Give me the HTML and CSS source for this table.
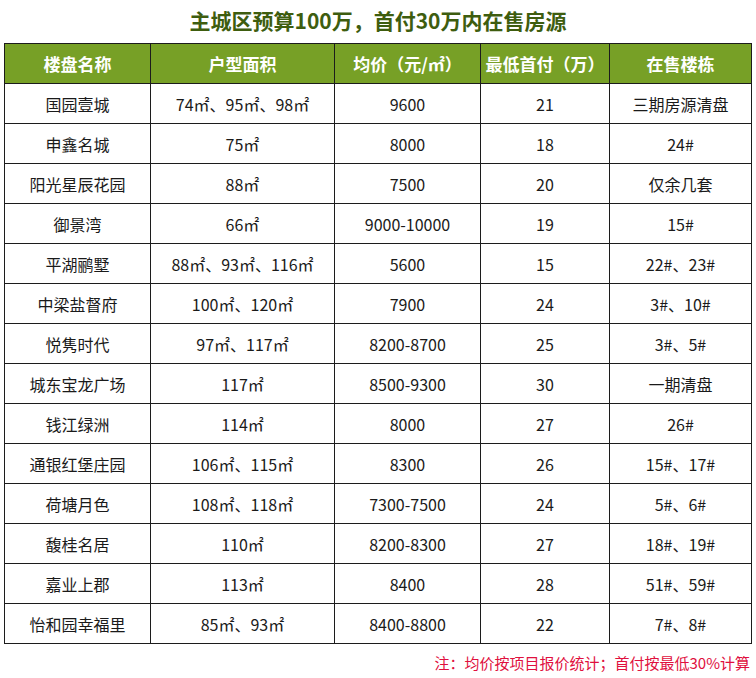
FILE: index.html
```html
<!DOCTYPE html>
<html lang="zh-CN">
<head>
<meta charset="utf-8">
<link rel="stylesheet" href="styles.css">
</head>
<body>
<div class="page">
  <h1 class="title">主城区预算100万，首付30万内在售房源</h1>
  <table class="grid">
    <colgroup>
      <col class="c1"><col class="c2"><col class="c3"><col class="c4"><col class="c5">
    </colgroup>
    <thead>
      <tr><th>楼盘名称</th><th>户型面积</th><th>均价（元/㎡）</th><th>最低首付（万）</th><th>在售楼栋</th></tr>
    </thead>
    <tbody>
      <tr><td>国园壹城</td><td>74㎡、95㎡、98㎡</td><td>9600</td><td>21</td><td>三期房源清盘</td></tr>
      <tr><td>申鑫名城</td><td>75㎡</td><td>8000</td><td>18</td><td>24#</td></tr>
      <tr><td>阳光星辰花园</td><td>88㎡</td><td>7500</td><td>20</td><td>仅余几套</td></tr>
      <tr><td>御景湾</td><td>66㎡</td><td>9000-10000</td><td>19</td><td>15#</td></tr>
      <tr><td>平湖鹂墅</td><td>88㎡、93㎡、116㎡</td><td>5600</td><td>15</td><td>22#、23#</td></tr>
      <tr><td>中梁盐督府</td><td>100㎡、120㎡</td><td>7900</td><td>24</td><td>3#、10#</td></tr>
      <tr><td>悦隽时代</td><td>97㎡、117㎡</td><td>8200-8700</td><td>25</td><td>3#、5#</td></tr>
      <tr><td>城东宝龙广场</td><td>117㎡</td><td>8500-9300</td><td>30</td><td>一期清盘</td></tr>
      <tr><td>钱江绿洲</td><td>114㎡</td><td>8000</td><td>27</td><td>26#</td></tr>
      <tr><td>通银红堡庄园</td><td>106㎡、115㎡</td><td>8300</td><td>26</td><td>15#、17#</td></tr>
      <tr><td>荷塘月色</td><td>108㎡、118㎡</td><td>7300-7500</td><td>24</td><td>5#、6#</td></tr>
      <tr><td>馥桂名居</td><td>110㎡</td><td>8200-8300</td><td>27</td><td>18#、19#</td></tr>
      <tr><td>嘉业上郡</td><td>113㎡</td><td>8400</td><td>28</td><td>51#、59#</td></tr>
      <tr><td>怡和园幸福里</td><td>85㎡、93㎡</td><td>8400-8800</td><td>22</td><td>7#、8#</td></tr>
    </tbody>
  </table>
  <p class="note">注：均价按项目报价统计；首付按最低30%计算</p>
</div>
</body>
</html>
```

FILE: styles.css
```css
html, body {
  margin: 0;
  padding: 0;
  background: #ffffff;
}
.page {
  width: 756px;
  padding: 0 0 0 4px;
  box-sizing: border-box;
  font-family: "Noto Sans CJK SC", "Noto Sans", sans-serif;
}
.title {
  margin: 0;
  height: 43px;
  line-height: 40px;
  text-align: center;
  font-size: 21px;
  font-weight: bold;
  color: #3e5d0f;
  padding-right: 4px;
}
.grid {
  border-collapse: collapse;
  table-layout: fixed;
  width: 747px;
}
.c1 { width: 146px; }
.c2 { width: 184px; }
.c3 { width: 146px; }
.c4 { width: 129px; }
.c5 { width: 142px; }
.grid th, .grid td {
  border: 1px solid #1c1c1c;
  height: 39px;
  padding: 0;
  text-align: center;
  vertical-align: middle;
  white-space: nowrap;
}
.grid th {
  background: #77a026;
  color: #ffffff;
  font-size: 17px;
  font-weight: bold;
}
.grid td {
  font-size: 16px;
  color: #1a1a1a;
}
.note {
  margin: 8px 0 0 0;
  text-align: right;
  font-size: 15px;
  line-height: 22px;
  color: #e0103e;
  padding-right: 6px;
}
```
